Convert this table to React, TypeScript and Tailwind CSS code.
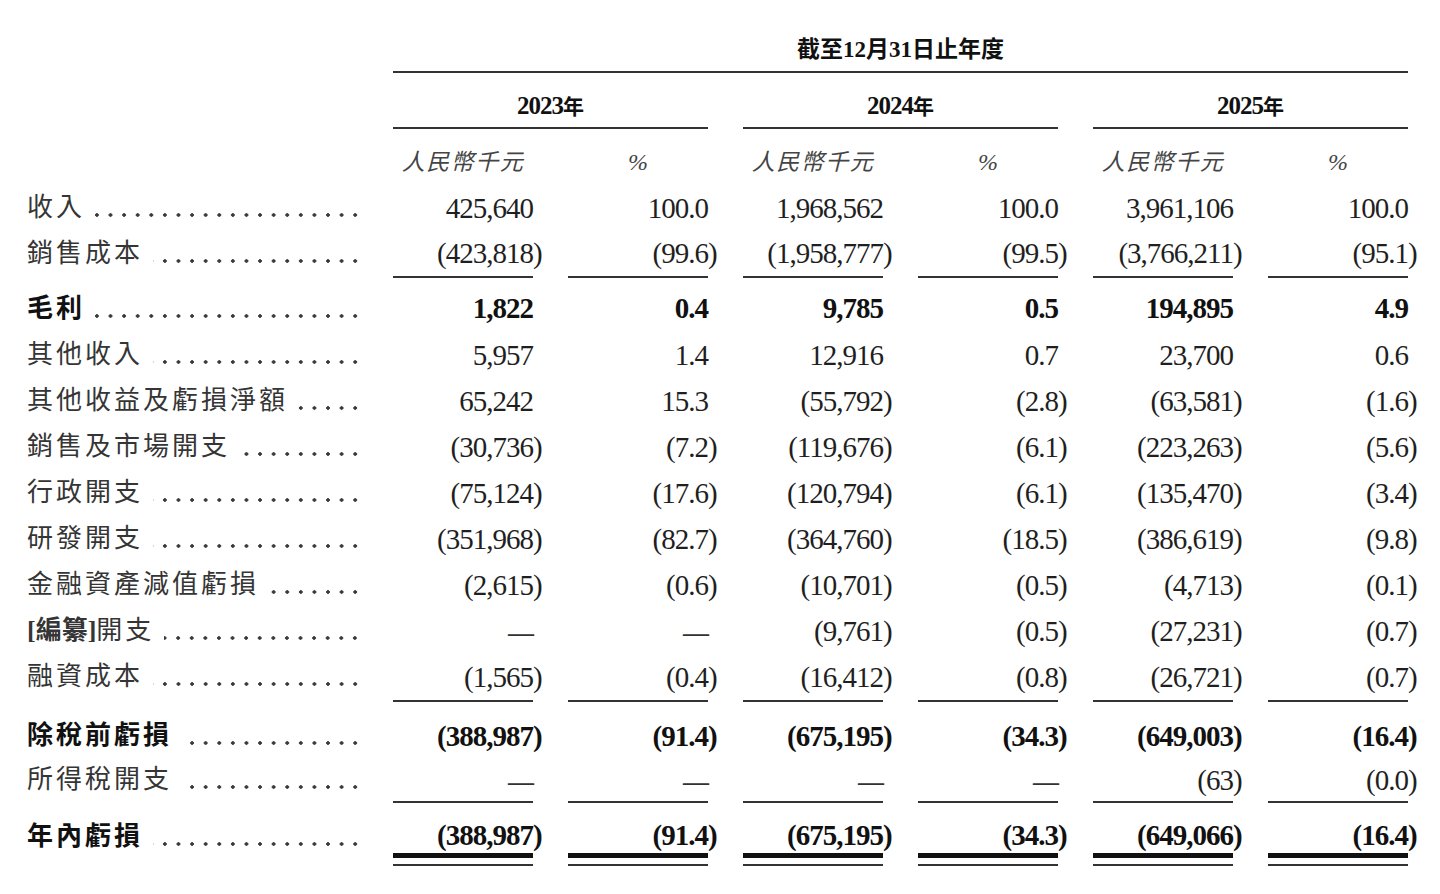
const rows: { label: React.ReactNode; v: string[]; bold?: boolean; h: string }[] = [
  { label: "收入", v: ["425,640", "100.0", "1,968,562", "100.0", "3,961,106", "100.0"], h: "h-[46px]" },
  { label: "銷售成本", v: ["(423,818)", "(99.6)", "(1,958,777)", "(99.5)", "(3,766,211)", "(95.1)"], h: "h-[45px]" },
  { label: "rule", v: [], h: "h-[9px]" },
  { label: "毛利", v: ["1,822", "0.4", "9,785", "0.5", "194,895", "4.9"], bold: true, h: "h-[47px]" },
  { label: "其他收入", v: ["5,957", "1.4", "12,916", "0.7", "23,700", "0.6"], h: "h-[46px]" },
  { label: "其他收益及虧損淨額", v: ["65,242", "15.3", "(55,792)", "(2.8)", "(63,581)", "(1.6)"], h: "h-[46px]" },
  { label: "銷售及市場開支", v: ["(30,736)", "(7.2)", "(119,676)", "(6.1)", "(223,263)", "(5.6)"], h: "h-[46px]" },
  { label: "行政開支", v: ["(75,124)", "(17.6)", "(120,794)", "(6.1)", "(135,470)", "(3.4)"], h: "h-[46px]" },
  { label: "研發開支", v: ["(351,968)", "(82.7)", "(364,760)", "(18.5)", "(386,619)", "(9.8)"], h: "h-[46px]" },
  { label: "金融資產減值虧損", v: ["(2,615)", "(0.6)", "(10,701)", "(0.5)", "(4,713)", "(0.1)"], h: "h-[46px]" },
  {
    label: (
      <>
        <span className="font-bold tracking-normal">[編纂]</span>開支
      </>
    ),
    v: ["—", "—", "(9,761)", "(0.5)", "(27,231)", "(0.7)"],
    h: "h-[46px]",
  },
  { label: "融資成本", v: ["(1,565)", "(0.4)", "(16,412)", "(0.8)", "(26,721)", "(0.7)"], h: "h-[46px]" },
  { label: "rule", v: [], h: "h-[13px]" },
  { label: "除稅前虧損", v: ["(388,987)", "(91.4)", "(675,195)", "(34.3)", "(649,003)", "(16.4)"], bold: true, h: "h-[46px]" },
  { label: "所得稅開支", v: ["—", "—", "—", "—", "(63)", "(0.0)"], h: "h-[42px]" },
  { label: "rule", v: [], h: "h-[11px]" },
];

const grid = "grid grid-cols-[331px_repeat(6,140px)] gap-x-[35px]";

function Value({ v, bold }: { v: string; bold?: boolean }) {
  if (v === "—") {
    return <span className="text-[26px] font-bold text-[#333]">—</span>;
  }
  const neg = v.startsWith("(");
  return (
    <span className={bold ? "font-bold text-[#111]" : "text-[#1f1f1f]"}>
      {neg ? v.slice(0, -1) : v}
      {neg && <span className="inline-block w-0">)</span>}
    </span>
  );
}

function Label({ children, bold }: { children: React.ReactNode; bold?: boolean }) {
  return (
    <div className="flex items-center">
      <span
        className={`whitespace-nowrap text-[26px] leading-none tracking-[3px] ${
          bold ? "font-bold text-[#111]" : "text-[#353535]"
        }`}
      >
        {children}
      </span>
      <span className="ml-[10px] -mr-[4px] mt-[14px] h-[4px] flex-1 bg-[radial-gradient(circle,#3a3a3a_1.5px,transparent_2.1px)] bg-[length:13.6px_4px] bg-repeat-x bg-[position:right_center]" />
    </div>
  );
}

function RuleRow({ h }: { h: string }) {
  return (
    <div className={`${grid} ${h}`}>
      <div />
      {[0, 1, 2, 3, 4, 5].map((i) => (
        <div key={i} className="border-t-2 border-[#333]" />
      ))}
    </div>
  );
}

export default function App() {
  return (
    <div className="h-[894px] w-[1440px] overflow-hidden bg-white pl-[27px] pt-[29px] font-['Liberation_Serif','Noto_Sans_CJK_TC',serif]">
      {/* column heads */}
      <div className="grid grid-cols-[331px_repeat(3,315px)] gap-x-[35px]">
        <div />
        <div className="col-span-3 flex h-[44px] items-center justify-center border-b-2 border-[#333] pb-[2px] text-[23px] font-bold leading-none text-[#111]">
          截至12月31日止年度
        </div>
        {["2023", "2024", "2025"].map((y, i) => (
          <div
            key={y}
            className={`${i === 0 ? "col-start-2" : ""} flex h-[56px] items-end justify-center border-b-2 border-[#333] pb-[9px] text-[25px] font-bold leading-none tracking-[-1px] text-[#111]`}
          >
            {y}
            <span className="text-[21px] tracking-normal">年</span>
          </div>
        ))}
      </div>
      <div className={`${grid} h-[56px] items-center pt-[10px]`}>
        <div />
        {[0, 1, 2].map((i) => (
          <div key={i} className="contents">
            <div className="text-center text-[23px] italic leading-none tracking-[1.5px] text-[#444]">人民幣千元</div>
            <div className="text-center text-[24px] italic leading-none text-[#444]">%</div>
          </div>
        ))}
      </div>

      {/* body */}
      {rows.map((r, idx) =>
        r.label === "rule" ? (
          <RuleRow key={idx} h={r.h} />
        ) : (
          <div key={idx} className={`${grid} ${r.h} items-center`}>
            <Label bold={r.bold}>{r.label}</Label>
            {r.v.map((v, i) => (
              <div key={i} className="text-right text-[29px] leading-none tracking-[-1px]">
                <Value v={v} bold={r.bold} />
              </div>
            ))}
          </div>
        )
      )}

      {/* final line */}
      <div className={`${grid} h-[41px] items-end pb-[3px]`}>
        <Label bold>年內虧損</Label>
        {["(388,987)", "(91.4)", "(675,195)", "(34.3)", "(649,066)", "(16.4)"].map((v, i) => (
          <div key={i} className="text-right text-[29px] leading-none tracking-[-1px]">
            <Value v={v} bold />
          </div>
        ))}
      </div>
      <div className={grid}>
        <div />
        {[0, 1, 2, 3, 4, 5].map((i) => (
          <div key={i} className="flex flex-col gap-[6px]">
            <div className="h-[5px] bg-[#111]" />
            <div className="h-[2px] bg-[#333]" />
          </div>
        ))}
      </div>
    </div>
  );
}
